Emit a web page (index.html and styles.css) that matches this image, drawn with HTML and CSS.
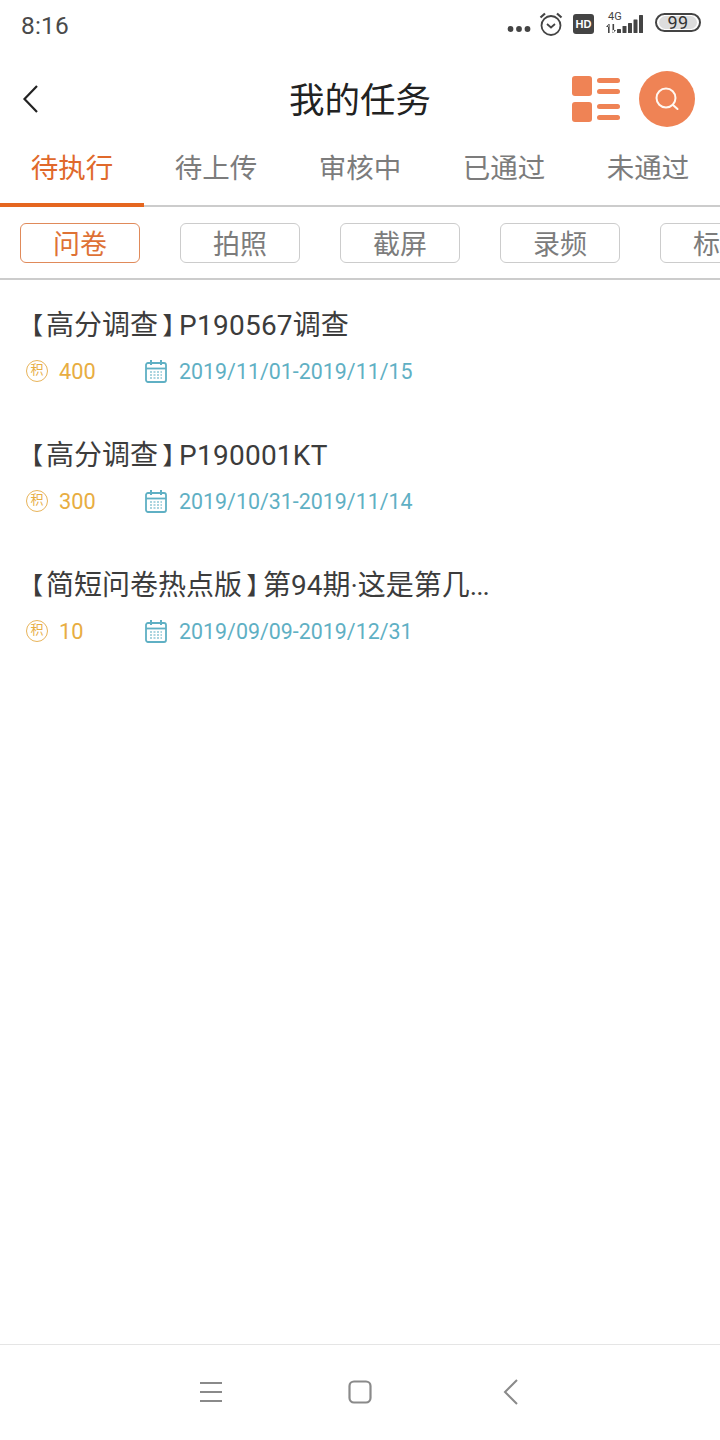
FILE: index.html
```html
<!DOCTYPE html>
<html lang="zh-CN">
<head>
<meta charset="utf-8">
<title>我的任务</title>
<link rel="stylesheet" href="styles.css">
</head>
<body>
<div class="page">
  <div class="status">
    <span class="time">8:16</span>
    <div class="status-icons">
      <svg class="i-dots" width="24" height="8" viewBox="0 0 24 8"><circle cx="3.500" cy="4" r="2.900"/><circle cx="12" cy="4" r="2.900"/><circle cx="20.500" cy="4" r="2.900"/></svg>
      <svg class="i-alarm" width="24" height="26" viewBox="0 0 24 26" fill="none" stroke="#444" stroke-width="1.800"><circle cx="12" cy="14.500" r="9.500"/><path d="M8 13l4 3.500 4-3.500"/><path d="M1.500 6.500L6 2.500M22.500 6.500L18 2.500" stroke-width="2.200"/></svg>
      <span class="hd">HD</span>
      <div class="net">
        <span class="net-label">4G</span>
        <svg class="i-signal" width="39" height="22" viewBox="0 0 39 22"><path d="M3 9v9h1.600V9zM1 12l2.500-3v3zM7.500 9v9h1.600V9zM7 15h4l-2.500 3z"/><rect x="12" y="14" width="4" height="4" rx=".5"/><rect x="17.500" y="11" width="4" height="7" rx=".5"/><rect x="23" y="8" width="4" height="10" rx=".5"/><rect x="28.500" y="4.500" width="4" height="13.500" rx=".5"/><rect x="34" y="0" width="4" height="18" rx=".5"/></svg>
      </div>
      <div class="battery"><span class="battery-num">99</span></div>
    </div>
  </div>

  <header class="header">
    <svg class="i-back" width="20" height="32" viewBox="0 0 20 32" fill="none" stroke="#222" stroke-width="2.200"><path d="M17 3L4.500 16 17 29"/></svg>
    <h1 class="title">我的任务</h1>
    <div class="actions">
      <svg width="48" height="46" viewBox="0 0 48 46" fill="#ef8355"><rect x="0" y="0" width="20" height="20" rx="3"/><rect x="0" y="26" width="20" height="20" rx="3"/><rect x="25" y="2" width="23" height="5" rx="2.500"/><rect x="25" y="13" width="23" height="5" rx="2.500"/><rect x="25" y="28" width="23" height="5" rx="2.500"/><rect x="25" y="39" width="23" height="5" rx="2.500"/></svg>
      <div class="search">
        <svg width="26" height="26" viewBox="0 0 26 26" fill="none" stroke="#fff8f2" stroke-width="2"><circle cx="12" cy="12" r="9.500"/><path d="M19 19l4.500 4" stroke-linecap="round"/></svg>
      </div>
    </div>
  </header>

  <nav class="tabs">
    <div class="tab active">待执行</div>
    <div class="tab">待上传</div>
    <div class="tab">审核中</div>
    <div class="tab">已通过</div>
    <div class="tab">未通过</div>
  </nav>

  <div class="chips">
    <div class="chip active">问卷</div>
    <div class="chip">拍照</div>
    <div class="chip">截屏</div>
    <div class="chip">录频</div>
    <div class="chip">标注</div>
  </div>

  <main class="list">
    <article class="item">
      <h2 class="item-title"><span class="br-l">【</span>高分调查<span class="br-r">】</span><span class="code">P190567</span>调查</h2>
      <div class="meta">
        <div class="points"><span class="coin">积</span><span>400</span></div>
        <div class="dates"><svg class="cal" width="22" height="24" viewBox="0 0 22 24"><use href="#cal"/></svg><span>2019/11/01-2019/11/15</span></div>
      </div>
    </article>
    <article class="item">
      <h2 class="item-title"><span class="br-l">【</span>高分调查<span class="br-r">】</span><span class="code">P190001KT</span></h2>
      <div class="meta">
        <div class="points"><span class="coin">积</span><span>300</span></div>
        <div class="dates"><svg class="cal" width="22" height="24" viewBox="0 0 22 24"><use href="#cal"/></svg><span>2019/10/31-2019/11/14</span></div>
      </div>
    </article>
    <article class="item">
      <h2 class="item-title"><span class="br-l">【</span>简短问卷热点版<span class="br-r">】</span>第94期·这是第几<span class="dots">...</span></h2>
      <div class="meta">
        <div class="points"><span class="coin">积</span><span>10</span></div>
        <div class="dates"><svg class="cal" width="22" height="24" viewBox="0 0 22 24"><use href="#cal"/></svg><span>2019/09/09-2019/12/31</span></div>
      </div>
    </article>
  </main>

  <footer class="sysnav">
    <svg width="22" height="22" viewBox="0 0 22 22" fill="none" stroke="#8a8a8a" stroke-width="2"><path d="M0 2h22M0 11h22M0 20h22"/></svg>
    <svg width="24" height="24" viewBox="0 0 24 24" fill="none" stroke="#8a8a8a" stroke-width="2.200"><rect x="1.500" y="1.500" width="21" height="21" rx="4.500"/></svg>
    <svg class="nav-back" width="16" height="26" viewBox="0 0 16 26" fill="none" stroke="#8a8a8a" stroke-width="2"><path d="M14 1L2 13l12 12"/></svg>
  </footer>
</div>
<svg class="defs" width="0" height="0">
  <symbol id="cal" viewBox="0 0 22 24">
    <rect x="1" y="4" width="20" height="19" rx="2" fill="none" stroke="#5fb0c4" stroke-width="1.800"/>
    <path d="M1 9.500h20" stroke="#5fb0c4" stroke-width="1.800"/>
    <path d="M6 1v5M16 1v5" stroke="#5fb0c4" stroke-width="2"/>
    <path d="M5 13h12M5 16h12M5 19h12" stroke="#5fb0c4" stroke-width="1.500" stroke-dasharray="2 1.500" opacity=".7"/>
  </symbol>
</svg>
</body>
</html>
```
FILE: styles.css
```css
* { box-sizing: border-box; }
html, body { margin: 0; padding: 0; background: #fff; }
body { font-family: Roboto, "Noto Sans CJK SC", sans-serif; }
.page { width: 720px; height: 1440px; display: flex; flex-direction: column; overflow: hidden; }
.defs { position: absolute; }

.status { height: 50px; display: flex; align-items: center; justify-content: space-between; padding: 0 19px 0 21px; color: #444; }
.time { font-size: 24.500px; letter-spacing: .2px; color: #4a4a4a; padding-top: 1px; }
.status-icons { display: flex; align-items: center; }
.i-dots { fill: #444; margin: 8px 8px 0 0; }
.i-alarm { margin: -2px 10px 0 0; }
.hd { width: 21px; height: 20px; border-radius: 3px; background: #444; color: #fff; font-size: 11px; font-weight: 700; line-height: 20px; text-align: center; margin: -2px 11px 0 0; font-family: "Liberation Sans", sans-serif; }
.net { position: relative; width: 39px; height: 28px; margin: -4px 11px 0 0; }
.net-label { position: absolute; left: 3px; top: 2px; font-size: 11px; line-height: 12px; color: #444; }
.i-signal { position: absolute; left: 0; top: 6px; fill: #444; }
.battery { width: 46px; height: 19px; border: 2px solid #444; border-radius: 10px; padding: 1px 2px; margin-top: -5px; }
.battery-num { display: block; height: 13px; border-radius: 7px; background: #ddd; color: #333; font-size: 18px; line-height: 13px; text-align: center; letter-spacing: .5px; }

.header { height: 94px; display: flex; align-items: center; justify-content: space-between; position: relative; padding: 4px 25px 0 20px; }
.title { position: absolute; left: 0; right: 0; top: 26px; text-align: center; margin: 0; font-size: 35.500px; font-weight: 400; color: #222; line-height: 50px; }
.actions { display: flex; align-items: center; gap: 19px; position: relative; }
.search { width: 56px; height: 56px; border-radius: 50%; background: #ef8355; display: flex; align-items: center; justify-content: center; }

.tabs { height: 63px; display: flex; border-bottom: 2px solid #ccc; }
.tab { width: 144px; height: 63px; flex: none; text-align: center; font-size: 27.500px; line-height: 49px; color: #7c7c7c; }
.tab.active { color: #e0692b; border-bottom: 4px solid #e5661f; }

.chips { height: 73px; display: flex; gap: 40px; padding: 16px 0 0 20px; border-bottom: 2px solid #ccc; overflow: hidden; }
.chip { width: 120px; height: 40px; flex: none; border: 1px solid #ccc; border-radius: 6px; text-align: center; font-size: 27px; line-height: 42px; color: #7c7c7c; }
.chip.active { color: #de7236; border-color: #e08a5a; }

.list { flex: 1; padding-left: 20px; }
.item { height: 130px; padding-top: 23px; }
.item-title { margin: 0; font-size: 28px; font-weight: 400; color: #3c3c3c; line-height: 46px; white-space: nowrap; display: flex; }
.br-l, .br-r { font-size: 24px; flex: none; }
.br-l { width: 26px; text-indent: -1px; }
.br-r { width: 21px; text-indent: 4.500px; }
.code { letter-spacing: .25px; }
.dots { letter-spacing: -1px; }
.meta { display: flex; align-items: center; height: 44px; }
.points { width: 120px; display: flex; align-items: center; gap: 11px; color: #e8ad42; margin-left: 6px; font-size: 21.800px; }
.coin { width: 22px; height: 22px; border: 1.500px solid #e8b45a; border-radius: 50%; font-size: 13px; line-height: 18px; text-align: center; flex: none; }
.dates { display: flex; align-items: center; gap: 12px; color: #5fb0c4; font-size: 21.400px; margin-left: -1px; }

.sysnav { height: 96px; border-top: 1px solid #e5e5e5; display: flex; align-items: center; justify-content: center; gap: 126px; padding: 0 1px 2px 0; }
.nav-back { margin-left: 5px; }
```
